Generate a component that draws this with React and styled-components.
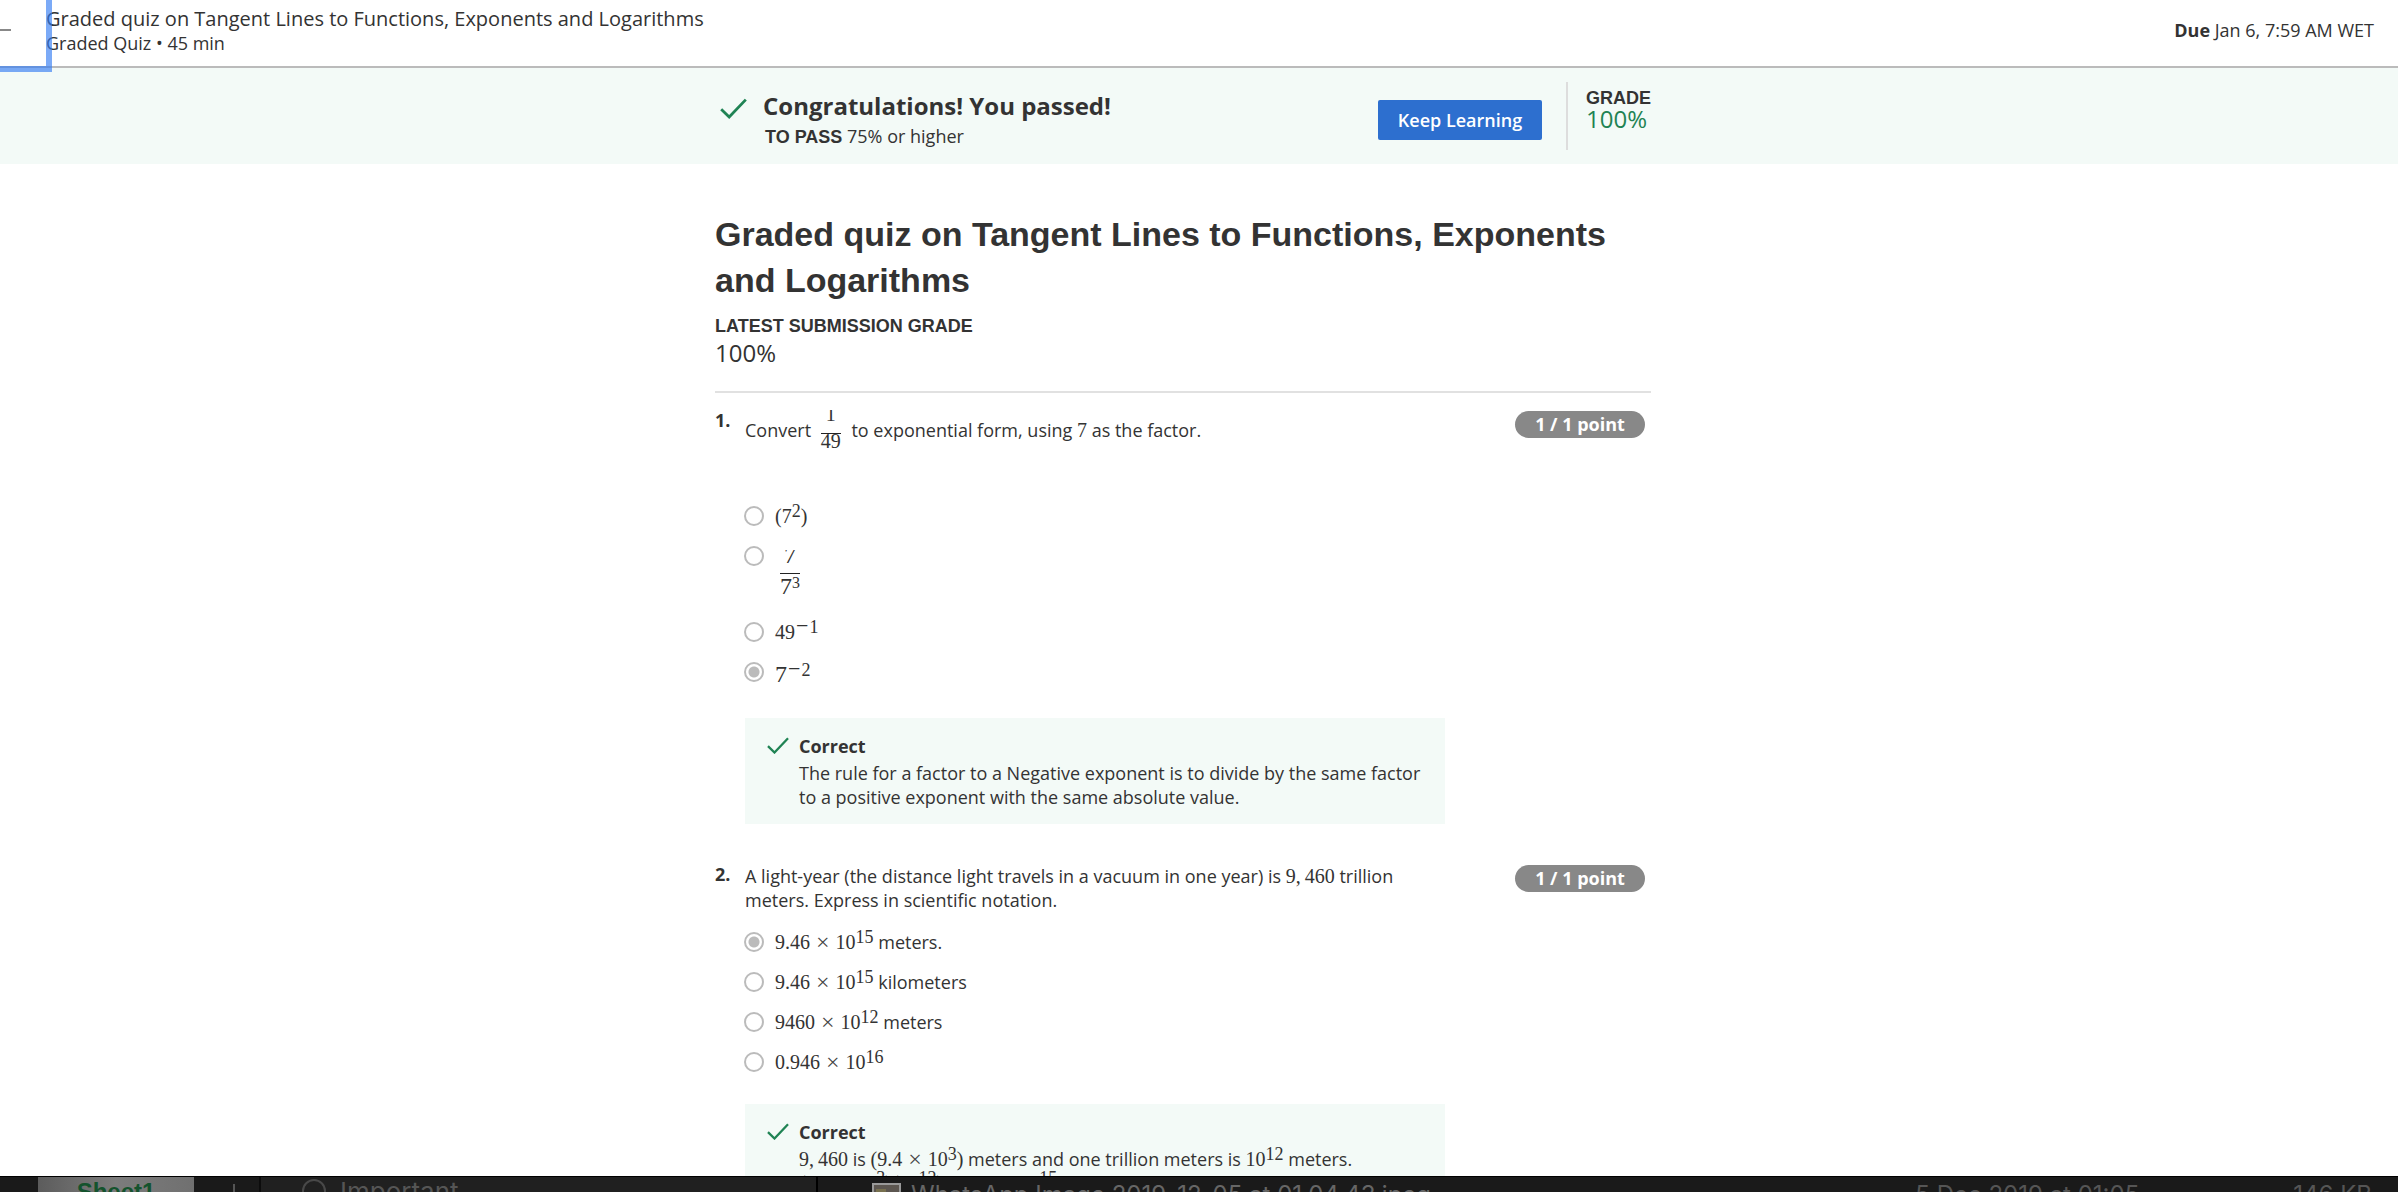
import React from "react";
import styled, { createGlobalStyle } from "styled-components";

const GlobalStyle = createGlobalStyle`
  *, *::before, *::after { box-sizing: border-box; }
  body {
    margin: 0;
    background: #fff;
    color: #333;
    font: 18px/24px "Open Sans", "Noto Sans", sans-serif;
  }
  h1, h2, p, fieldset { margin: 0; padding: 0; border: 0; min-width: 0; }
`;

const Page = styled.div`
  position: relative;
  height: 100vh;
  overflow: hidden;
`;

const Header = styled.header`
  display: flex;
  justify-content: space-between;
  align-items: center;
  min-height: 68px;
  padding: 0 24px 6px 46px;
  border-bottom: 2px solid #bbb;
`;

const HeaderTitle = styled.div`
  padding-top: 2px;
  font-size: 20px;
`;

const BackButton = styled.button`
  position: absolute;
  top: -8px;
  left: -20px;
  width: 66px;
  height: 74px;
  padding: 0;
  border: 0;
  background: none;
  box-shadow: 0 0 0 6px rgba(52, 124, 243, 0.65);
  svg { display: block; }
`;

const Banner = styled.section`
  background: #f3faf7;
  padding: 14px 32px 14px 0;
`;

const Container = styled.div`
  width: 100%;
  max-width: 936px;
  margin: 0 auto;
`;

const BannerRow = styled(Container)`
  display: flex;
  align-items: center;
  height: 68px;
`;

const Status = styled.div`
  flex: 1;
  display: grid;
  grid-template-columns: 48px 1fr;
  padding-top: 6px;
`;

const StatusTitle = styled.h2`
  font-size: 24px;
  line-height: 32px;
`;

const Caption = styled.span`
  font: bold 18px/24px "Liberation Sans", Arial, sans-serif;
`;

const ToPass = styled.p`
  grid-column: 2;
  padding: 2px 2px 0;
`;

const Primary = styled.button`
  width: 164px;
  height: 40px;
  margin: 8px 24px 0 0;
  border: 0;
  border-radius: 2px;
  background: #2d6fcf;
  color: #fff;
  font: 600 18px/24px "Open Sans", sans-serif;
`;

const Grade = styled.div`
  display: flex;
  flex-direction: column;
  align-self: stretch;
  width: 85px;
  padding: 4px 0 0 18px;
  border-left: 2px solid #ddd;
`;

const Score = styled.span`
  font-size: 24px;
  line-height: ${(p) => (p.$pass ? "18px" : "30px")};
  color: ${(p) => (p.$pass ? "#1f8354" : "inherit")};
`;

const Main = styled.main`
  padding: 47px 32px 0 0;
`;

const Title = styled.h1`
  font: bold 34px/46px "Liberation Sans", Arial, sans-serif;
`;

const Latest = styled.div`
  display: flex;
  flex-direction: column;
  padding: 11px 0 23px;
  border-bottom: 2px solid #e1e1e1;
`;

const Question = styled.section`
  display: grid;
  grid-template-columns: 30px minmax(0, 700px) 1fr;
  padding-top: ${(p) => (p.$first ? "15px" : "38px")};
`;

const QuestionNumber = styled.b``;

const Prompt = styled.div`
  padding-top: 2px;
  margin-bottom: ${(p) => p.$space}px;
`;

const Points = styled.div`
  justify-self: end;
  width: 130px;
  height: 27px;
  margin: 3px 6px 0 0;
  border-radius: 14px;
  background: #888;
  color: #fff;
  font-weight: bold;
  line-height: 26px;
  text-align: center;
`;

const Options = styled.fieldset`
  display: flex;
  flex-direction: column;
  gap: 16px;
  margin-bottom: 30px;
`;

const OptionLabel = styled.label`
  display: flex;
  align-items: flex-start;
  gap: 11px;
  height: ${(p) => p.$height || 24}px;
`;

const Radio = styled.input.attrs({ type: "radio" })`
  appearance: none;
  flex: none;
  width: 20px;
  height: 20px;
  margin: 2px 0 0 -1px;
  border: 2px solid #bbb;
  border-radius: 50%;
  background: #fff;
  &:checked {
    background: radial-gradient(circle, #bbb 0 5px, #fff 6px);
  }
`;

const Feedback = styled.div`
  display: grid;
  grid-template-columns: 54px 1fr;
  row-gap: 3px;
  padding: 16px 0 15px;
  background: #f3faf7;
`;

const FeedbackCheck = styled.div`
  padding: 3px 0 0 22px;
`;

const FeedbackText = styled.p`
  grid-column: 2;
  padding-right: 16px;
`;

const MathText = styled.span`
  font-family: "Liberation Serif", "Times New Roman", serif;
  font-size: ${(p) => (p.$big ? 24 : 20)}px;
  line-height: ${(p) => (p.$big ? 28 : 20)}px;
  white-space: nowrap;
`;

const Sup = styled.span`
  font-size: ${(p) => (p.$small ? 16 : 18)}px;
  line-height: 0;
  vertical-align: 6px;
`;

const Op = styled.span`
  margin: 0 6px;
  color: #444;
  font-size: 24px;
  line-height: 0;
  vertical-align: -1px;
`;

const Minus = styled.span`
  margin: 0 1px;
  font-size: 22px;
`;

const Fraction = styled.span`
  display: inline-flex;
  flex-direction: column;
  align-items: center;
  margin: ${(p) => (p.$block ? "6px 5px 0" : "0 6px 0 5px")};
  vertical-align: ${(p) => (p.$block ? "top" : "16px")};
`;

const Numerator = styled.span`
  height: 23px;
`;

const Clip = styled.span`
  display: block;
  height: 13px;
  overflow: hidden;
  line-height: ${(p) => (p.$tall ? 10 : 9)}px;
`;

const Denominator = styled.span`
  border-top: 1px solid #222;
  line-height: ${(p) => (p.$tall ? 24 : 14)}px;
`;

const Dock = styled.div`
  position: absolute;
  left: 0;
  right: 0;
  bottom: 0;
  display: flex;
  height: 16px;
  overflow: hidden;
  border-top: 1px solid #000;
  background: #1a1a1a;
  color: #555;
  font: 24px/30px Inter, Roboto, sans-serif;
`;

const SheetPane = styled.div`
  display: flex;
  width: 261px;
  padding-left: 38px;
  border-right: 2px solid #0c0c0c;
`;

const SheetTab = styled.div`
  width: 156px;
  height: 30px;
  background: linear-gradient(90deg, #5c5c5c, #7c7c7c 50%, #707070);
  color: #14532d;
  font: bold 24px/30px "Liberation Sans", Arial, sans-serif;
  text-align: center;
`;

const TabDivider = styled.div`
  width: 2px;
  height: 24px;
  margin: 7px 0 0 39px;
  background: #555;
`;

const TagPane = styled.div`
  display: flex;
  gap: 14px;
  width: 557px;
  padding-left: 41px;
  border-right: 2px solid #000;
  background: #202020;
  font-size: 26px;
`;

const TagDot = styled.span`
  width: 24px;
  height: 24px;
  margin-top: 2px;
  border: 2px solid #484848;
  border-radius: 50%;
`;

const FilePane = styled.div`
  flex: 1;
  display: flex;
  gap: 10px;
  padding: 3px 26px 0 54px;
`;

const FileName = styled.span`
  flex: 1;
  color: #666;
`;

const FileDate = styled.span`
  margin-right: 144px;
`;

const StatusCheck = styled.div`
  padding: 8px 0 0 5px;
`;

const CheckIcon = styled.svg`
  display: block;
`;

function Check({ size }) {
  return (
    <CheckIcon width={size} height={size * 0.78} viewBox="0 0 27 21" fill="none" aria-hidden="true">
      <path d="M1.2 11.2 L9.2 19 L25.8 1.6" stroke="#1f8354" strokeWidth="2.8" />
    </CheckIcon>
  );
}

const Pow = ({ children, small }) => <Sup $small={small}>{children}</Sup>;
const Times = () => <Op>×</Op>;

function Option({ name, id, checked, height, children }) {
  return (
    <OptionLabel $height={height} htmlFor={id}>
      <Radio id={id} name={name} defaultChecked={checked} />
      <span>{children}</span>
    </OptionLabel>
  );
}

function Correct({ children }) {
  return (
    <Feedback>
      <FeedbackCheck><Check size={22} /></FeedbackCheck>
      <b>Correct</b>
      <FeedbackText>{children}</FeedbackText>
    </Feedback>
  );
}

export default function App() {
  return (
    <Page>
      <GlobalStyle />
      <Header>
        <div>
          <HeaderTitle>Graded quiz on Tangent Lines to Functions, Exponents and Logarithms</HeaderTitle>
          <div>Graded Quiz • 45 min</div>
        </div>
        <div><b>Due</b> Jan 6, 7:59 AM WET</div>
      </Header>
      <BackButton aria-label="Back">
        <svg width="66" height="74" aria-hidden="true">
          <path d="M10 38H31" stroke="#888" strokeWidth="2" />
        </svg>
      </BackButton>

      <Banner>
        <BannerRow>
          <Status>
            <StatusCheck><Check size={27} /></StatusCheck>
            <StatusTitle>Congratulations! You passed!</StatusTitle>
            <ToPass><Caption>TO PASS</Caption> 75% or higher</ToPass>
          </Status>
          <Primary>Keep Learning</Primary>
          <Grade>
            <Caption>GRADE</Caption>
            <Score $pass>100%</Score>
          </Grade>
        </BannerRow>
      </Banner>

      <Main>
        <Container>
          <Title>Graded quiz on Tangent Lines to Functions, Exponents and Logarithms</Title>
          <Latest>
            <Caption>LATEST SUBMISSION GRADE</Caption>
            <Score>100%</Score>
          </Latest>

          <Question $first>
            <QuestionNumber>1.</QuestionNumber>
            <div>
              <Prompt $space={56}>
                Convert{" "}
                <MathText>
                  <Fraction>
                    <Numerator><Clip>1</Clip></Numerator>
                    <Denominator>49</Denominator>
                  </Fraction>
                </MathText>{" "}
                to exponential form, using <MathText>7</MathText> as the factor.
              </Prompt>
              <Options>
                <Option name="q1" id="q1a"><MathText>(7<Pow>2</Pow>)</MathText></Option>
                <Option name="q1" id="q1b" height={60}>
                  <MathText $big>
                    <Fraction $block>
                      <Numerator><Clip $tall>7</Clip></Numerator>
                      <Denominator $tall>7<Pow small>3</Pow></Denominator>
                    </Fraction>
                  </MathText>
                </Option>
                <Option name="q1" id="q1c"><MathText>49<Pow><Minus>−</Minus>1</Pow></MathText></Option>
                <Option name="q1" id="q1d" checked height={28}>
                  <MathText $big>7<Pow><Minus>−</Minus>2</Pow></MathText>
                </Option>
              </Options>
              <Correct>
                The rule for a factor to a Negative exponent is to divide by the same factor
                to a positive exponent with the same absolute value.
              </Correct>
            </div>
            <Points>1 / 1 point</Points>
          </Question>

          <Question>
            <QuestionNumber>2.</QuestionNumber>
            <div>
              <Prompt $space={18}>
                A light-year (the distance light travels in a vacuum in one year) is{" "}
                <MathText>9,{"\u2009"}460</MathText> trillion meters. Express in scientific notation.
              </Prompt>
              <Options>
                <Option name="q2" id="q2a" checked>
                  <MathText>9.46<Times />10<Pow>15</Pow></MathText> meters.
                </Option>
                <Option name="q2" id="q2b">
                  <MathText>9.46<Times />10<Pow>15</Pow></MathText> kilometers
                </Option>
                <Option name="q2" id="q2c">
                  <MathText>9460<Times />10<Pow>12</Pow></MathText> meters
                </Option>
                <Option name="q2" id="q2d">
                  <MathText>0.946<Times />10<Pow>16</Pow></MathText>
                </Option>
              </Options>
              <Correct>
                <MathText>9,{"\u2009"}460</MathText> is <MathText>(9.4<Times />10<Pow>3</Pow>)</MathText> meters and one
                trillion meters is <MathText>10<Pow>12</Pow></MathText> meters.
                <br />
                <MathText>
                  (9.4<Times />10<Pow>3</Pow>)(10<Pow>12</Pow>)<Op>=</Op>9.4<Times />10<Pow>15</Pow>
                </MathText>
              </Correct>
            </div>
            <Points>1 / 1 point</Points>
          </Question>
        </Container>
      </Main>

      <Dock>
        <SheetPane>
          <SheetTab>Sheet1</SheetTab>
          <TabDivider />
        </SheetPane>
        <TagPane>
          <TagDot />
          <span>Important</span>
        </TagPane>
        <FilePane>
          <svg width="29" height="20" aria-hidden="true">
            <rect x="1" y="4" width="27" height="20" fill="#5c5650" stroke="#999" strokeWidth="2" />
            <path d="M4 9h10v9H4z" fill="#77704f" />
          </svg>
          <FileName>WhatsApp Image 2019-12-05 at 01.04.43.jpeg</FileName>
          <FileDate>5 Dec 2019 at 01:05</FileDate>
          <span>146 KB</span>
        </FilePane>
      </Dock>
    </Page>
  );
}
